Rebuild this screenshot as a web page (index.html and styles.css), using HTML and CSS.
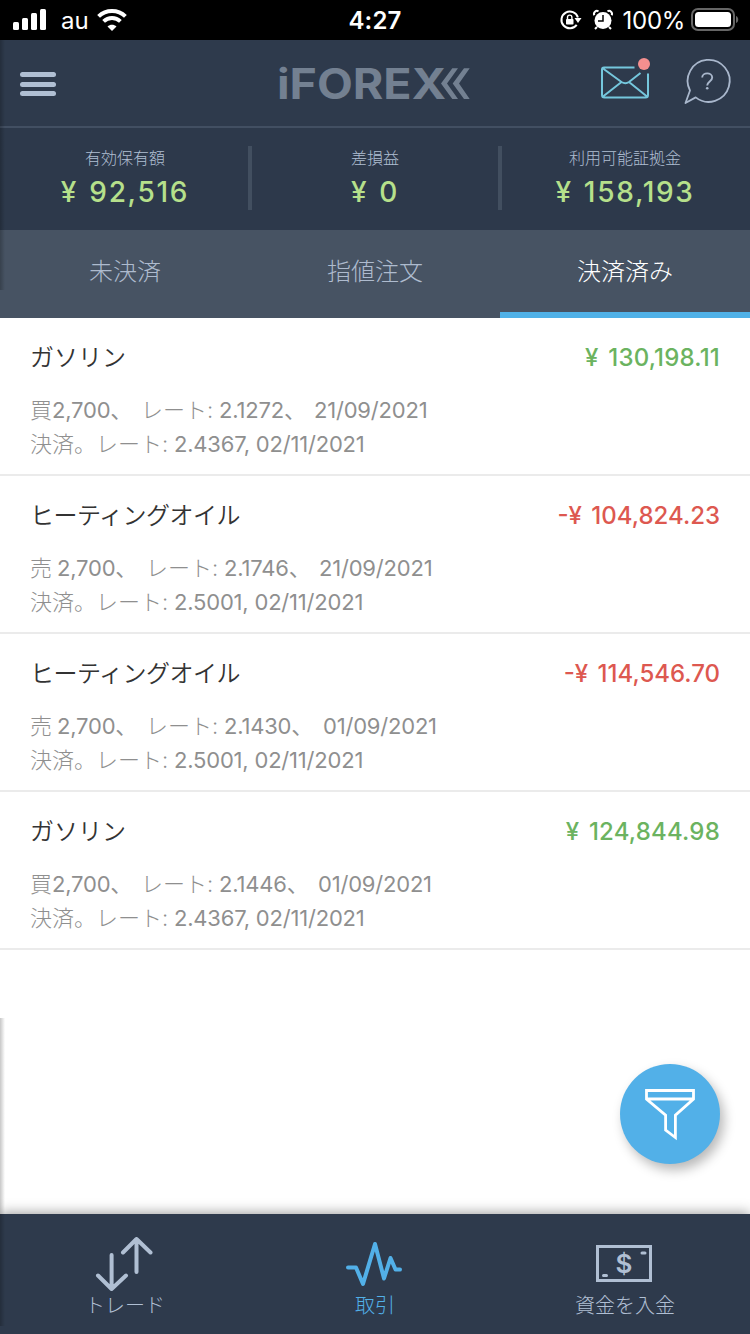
FILE: index.html
```html
<!DOCTYPE html>
<html lang="ja">
<head>
<meta charset="utf-8">
<title>iFOREX</title>
<link rel="stylesheet" href="styles.css">
</head>
<body>
<div class="app">
  <div class="status">
    <div class="status-left">
      <svg class="signal" width="34" height="22" viewBox="0 0 34 22" fill="#fff"><rect x="0" y="13" width="6" height="8" rx="1.5"/><rect x="9" y="9" width="6" height="12" rx="1.5"/><rect x="18" y="4" width="6" height="17" rx="1.5"/><rect x="27" y="0" width="6" height="21" rx="1.5"/></svg>
      <span class="carrier">au</span>
      <svg width="30" height="22" viewBox="0 0 30 22" fill="none" stroke="#fff" stroke-width="4"><path d="M1.6 7.4C9 .2 21 .2 28.400 7.400"/><path d="M6.600 12.400c4.800-4.400 12-4.400 16.800 0"/><path d="M15 22l-4.500-4.500c2.500-2.300 6.500-2.300 9 0z" fill="#fff" stroke="none"/></svg>
    </div>
    <span class="clock">4:27</span>
    <div class="status-right">
      <svg width="22" height="20" viewBox="0 0 22 20"><path d="M16.700 14.800A8.400 8.400 0 1 1 17.900 7.500" fill="none" stroke="#fff" stroke-width="2"/><path d="M14.500 8h7l-3.500 5z" fill="#fff"/><rect x="6" y="9" width="7.500" height="5.500" rx=".8" fill="#fff"/><path d="M7.500 9V7.300a2.200 2.200 0 0 1 4.400 0V9" fill="none" stroke="#fff" stroke-width="1.400"/></svg>
      <svg class="alarm" width="20" height="20" viewBox="0 0 20 20"><circle cx="10" cy="10.500" r="8.500" fill="#fff"/><path d="M1.300 5.200A3 3 0 0 1 5.500 1.300M14.500 1.300a3 3 0 0 1 4.200 3.900M4 17l-2 2M16 17l2 2" fill="none" stroke="#fff" stroke-width="2"/><path d="M10 5v6H5" fill="none" stroke="#000" stroke-width="1.500"/></svg>
      <span class="percent">100%</span>
      <svg width="48" height="24" viewBox="0 0 48 24"><rect x="1" y="1" width="42" height="21" rx="6" fill="none" stroke="#666" stroke-width="2"/><rect x="4" y="4" width="36" height="15" rx="3.500" fill="#fff"/><path d="M45 8c3 1 3 6 0 7z" fill="#666"/></svg>
    </div>
  </div>

  <header class="topbar">
    <div class="menu"><i></i><i></i><i></i></div>
    <svg class="logo" width="192" height="34" viewBox="0 0 192 34"><text class="logo-text" x="-2" y="33" textLength="169" lengthAdjust="spacingAndGlyphs">iFOREX</text><path d="M173.300 2.300h5.700L168 17.500 179 33h-5.700L162 17.500zM185 2.300h5.700L180 17.500 190.700 33H185L173.700 17.500z" fill="#738091"/></svg>
    <div class="actions">
      <svg width="50" height="44" viewBox="0 0 50 44"><g fill="none" stroke="#75c7dd" stroke-width="2"><path d="M34.500 10.500H4Q2 10.500 2 12.500V38q0 2.500 2.500 2.500h41Q48 40.500 48 38V16.500M3 11.500l18.500 13.500q4 2.500 7.500 0l11.500-9M3 39.500L21.500 25M47 39.500L29 25"/></g><circle cx="44" cy="7" r="6" fill="#f48f8f"/></svg>
      <svg class="help" width="46" height="48" viewBox="0 0 46 48"><path d="M6 33.500A21 21 0 1 1 11.700 40.400L1.500 46z" fill="none" stroke="#a9b7cc" stroke-width="1.800" stroke-linejoin="round"/><path d="M18.200 20.500c0-5.500 10-5.500 10 0 0 4-5 4-5 8" fill="none" stroke="#a9b7cc" stroke-width="1.900"/><circle cx="23.200" cy="31.300" r="1.300" fill="#a9b7cc"/></svg>
    </div>
  </header>

  <section class="account">
    <div class="figure"><span class="label">有効保有額</span><span class="amount">¥ 92,516</span></div>
    <div class="figure"><span class="label">差損益</span><span class="amount">¥ 0</span></div>
    <div class="figure"><span class="label">利用可能証拠金</span><span class="amount">¥ 158,193</span></div>
  </section>

  <nav class="tabs"><span>未決済</span><span>指値注文</span><span class="active">決済済み</span></nav>

  <main class="deals">
    <article class="deal">
      <div class="head"><span class="name">ガソリン</span><span class="gain">¥ 130,198.11</span></div>
      <div class="line"><span class="w-buy">買</span><span class="w-qty">2,700、</span><span class="w-rate">レート:</span><span class="w-open">2.1272、</span><span>21/09/2021</span></div>
      <div class="line"><span class="w-close">決済。</span><span class="w-rate">レート:</span><span>2.4367, 02/11/2021</span></div>
    </article>
    <article class="deal">
      <div class="head"><span class="name long">ヒーティングオイル</span><span class="loss">-¥ 104,824.23</span></div>
      <div class="line"><span class="w-sell">売</span><span class="w-qty">2,700、</span><span class="w-rate">レート:</span><span class="w-open">2.1746、</span><span>21/09/2021</span></div>
      <div class="line"><span class="w-close">決済。</span><span class="w-rate">レート:</span><span>2.5001, 02/11/2021</span></div>
    </article>
    <article class="deal">
      <div class="head"><span class="name long">ヒーティングオイル</span><span class="loss">-¥ 114,546.70</span></div>
      <div class="line"><span class="w-sell">売</span><span class="w-qty">2,700、</span><span class="w-rate">レート:</span><span class="w-open wide">2.1430、</span><span>01/09/2021</span></div>
      <div class="line"><span class="w-close">決済。</span><span class="w-rate">レート:</span><span>2.5001, 02/11/2021</span></div>
    </article>
    <article class="deal">
      <div class="head"><span class="name">ガソリン</span><span class="gain">¥ 124,844.98</span></div>
      <div class="line"><span class="w-buy">買</span><span class="w-qty">2,700、</span><span class="w-rate">レート:</span><span class="w-open wide">2.1446、</span><span>01/09/2021</span></div>
      <div class="line"><span class="w-close">決済。</span><span class="w-rate">レート:</span><span>2.4367, 02/11/2021</span></div>
    </article>
  </main>

  <button class="filter" aria-label="filter"><svg width="52" height="54" viewBox="0 0 52 54" fill="none" stroke="#fff" stroke-width="2.800"><path d="M2.500 3.500h47v8.500L31.400 28.200V50.500L21.600 43V28.200L2.500 12zM2.500 12h47"/></svg></button>

  <footer class="bottom">
    <div class="item"><svg width="58" height="56" viewBox="0 0 58 56" fill="none" stroke="#b0bfd3" stroke-width="4" stroke-linecap="round" stroke-linejoin="round"><path d="M16.600 20v34M3 40.500l13.600 13.500L31 40.500M41.500 37V4M28 17.500L41.500 4 55.500 17.500"/></svg><span>トレード</span></div>
    <div class="item current"><svg width="58" height="56" viewBox="0 0 58 56" fill="none" stroke="#52b0e8" stroke-width="4" stroke-linecap="round" stroke-linejoin="round"><path d="M3 32.500h8l7 16.500L30 9l9 34.500L45.500 23l5 11.500H55"/></svg><span>取引</span></div>
    <div class="item"><svg width="58" height="56" viewBox="0 0 58 56"><rect x="2.500" y="11.500" width="53" height="34" fill="none" stroke="#b0bfd3" stroke-width="3"/><path d="M47 18h3M8.500 40.500h3" stroke="#b0bfd3" stroke-width="3" stroke-linecap="round"/><text class="dollar" x="29" y="38" text-anchor="middle">$</text></svg><span>資金を入金</span></div>
  </footer>
  <div class="edge edge-top"></div>
  <div class="edge edge-bottom"></div>
</div>
</body>
</html>
```

FILE: styles.css
```css
* { box-sizing: border-box; }
body { margin: 0; font-family: Inter, "Noto Sans CJK JP", sans-serif; }
.app { position: relative; width: 750px; height: 1334px; background: #fff; display: flex; flex-direction: column; overflow: hidden; white-space: nowrap; }
svg { display: block; flex: none; overflow: visible; }

.status { height: 40px; background: #000; color: #fff; display: grid; grid-template-columns: 1fr auto 1fr; align-items: center; padding: 0 12px; flex: none; }
.status-left, .status-right { display: flex; align-items: center; }
.signal { margin-left: 1px; }
.status-right { justify-content: flex-end; }
.carrier { font-size: 24px; line-height: 38px; padding-top: 2px; width: 36px; margin-left: 14px; }
.clock { font-size: 24px; font-weight: 600; line-height: 38px; padding-top: 2px; letter-spacing: 0.2px; }
.alarm { margin-left: 11px; }
.percent { font-size: 24px; line-height: 38px; padding-top: 2px; letter-spacing: -0.3px; margin: 0 6px 0 10px; }
.status-right { margin-right: -1px; }

.topbar { height: 88px; background: #2e3a4c; border-bottom: 2px solid #424f62; display: grid; grid-template-columns: 1fr 192px 1fr; align-items: center; padding: 0 20px; flex: none; }
.menu { display: flex; flex-direction: column; gap: 4.5px; width: 36px; padding-top: 2px; }
.menu i { height: 5px; border-radius: 3px; background: #b0bfd3; }
.logo-text { font: 700 42px Inter, sans-serif; fill: #738091; }
.actions { display: flex; justify-content: flex-end; align-items: center; gap: 34px; margin-top: -8px; }
.help { margin-top: 3px; }

.account { height: 102px; background: #2d394b; display: grid; grid-template-columns: repeat(3, 1fr); flex: none; padding-top: 18px; }
.figure { height: 64px; display: flex; flex-direction: column; align-items: center; border: solid #424f60; border-width: 0 2px; }
.figure:first-child { border-left-color: transparent; }
.figure:last-child { border-right-color: transparent; }
.label { font-size: 16px; line-height: 24px; font-weight: 300; color: #b0bfd3; }
.amount { font-size: 28px; line-height: 45px; font-weight: 500; letter-spacing: 1.7px; word-spacing: 2px; color: #b6e08b; }

.tabs { height: 88px; background: #475363; display: grid; grid-template-columns: repeat(3, 1fr); flex: none; color: #aebbce; font-size: 24px; font-weight: 300; line-height: 84px; text-align: center; }
.tabs span { height: 88px; }
.tabs .active { color: #fff; border-bottom: 6px solid #50b1e7; }

.deal { height: 158px; padding: 22px 30px 0; border-bottom: 2px solid #ebebeb; }
.head { display: flex; justify-content: space-between; font-size: 24px; line-height: 34px; margin-bottom: 19px; }
.name { color: #333; font-weight: 350; padding-top: 1px; height: 34px; }
.long { letter-spacing: -0.5px; }
.gain, .loss { font-weight: 450; word-spacing: 3px; padding-top: 1px; height: 34px; letter-spacing: 0.2px; }
.gain { color: #6bb360; }
.loss { color: #dd5850; letter-spacing: 0; }
.line { display: flex; font-size: 22px; line-height: 34px; font-weight: 400; letter-spacing: -0.2px; color: #8f8f8f; }
.line span { flex: none; }
.line .w-buy, .line .w-sell, .line .w-close, .line .w-rate { font-weight: 300; letter-spacing: 0; }
.w-buy { width: 22px; }
.w-sell { width: 27px; }
.w-qty { width: 89px; }
.w-rate { width: 78px; }
.w-close { width: 66px; }
.w-open { width: 95px; }
.wide { width: 99px; }

.filter { position: absolute; left: 620px; top: 1064px; width: 100px; height: 100px; border: 0; border-radius: 50%; background: #52b0e8; display: flex; align-items: center; justify-content: center; padding: 0; box-shadow: 4px 6px 12px rgba(0,0,0,.28); }

.bottom { height: 120px; margin-top: auto; background: #2e3a4c; display: grid; grid-template-columns: repeat(3, 1fr); flex: none; color: #b0bfd3; box-shadow: 0 -1px 12px rgba(0,0,0,.4); }
.item { display: flex; flex-direction: column; align-items: center; padding-top: 21px; font-size: 20px; line-height: 30px; font-weight: 300; }
.item svg { margin-left: -2px; }
.current { color: #52b0e8; }
.dollar { font: 600 26px Inter, sans-serif; fill: #b0bfd3; }

.edge { position: absolute; left: 0; width: 5px; background: linear-gradient(to right, rgba(0,0,0,.22), transparent); }
.edge-top { top: 40px; height: 250px; }
.edge-bottom { top: 1018px; height: 308px; }
```
